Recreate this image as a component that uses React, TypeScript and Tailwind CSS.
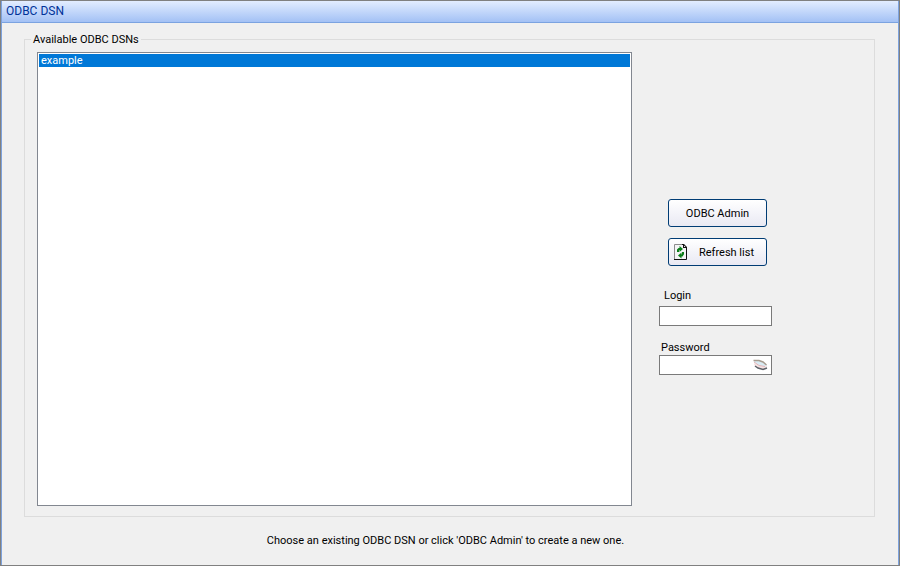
import { useState } from "react";

const DSN_LIST = ["example"];

const RefreshIcon = () => (
  <svg width="13" height="16" viewBox="0 0 13 16" aria-hidden="true">
    <path d="M0.5 0.5H9.500L12.500 3.500V15.500H0.5Z" fill="#f4f4f6" />
    <path d="M0.5 15.500V0.5H9" fill="none" stroke="#8c8c8c" />
    <path d="M8 0H10L13 3V5H12V4H9V1H8Z" fill="#111" />
    <path d="M10 1.500L11.500 3H10Z" fill="#fff" />
    <path d="M12.500 4V15.500H0" fill="none" stroke="#111" />
    <path d="M4 8V6L5 5H6" fill="none" stroke="#0b7d18" strokeWidth="2" />
    <path d="M5.500 2L9 5L5.500 8Z" fill="#0b7d18" />
    <path d="M9 8V10L8 11.500H7" fill="none" stroke="#0b7d18" strokeWidth="2" />
    <path d="M7.500 8.500L4 11.500L7.500 14.500Z" fill="#0b7d18" />
  </svg>
);

const EraserIcon = () => (
  <svg width="15" height="12" viewBox="0 0 15 12" aria-hidden="true">
    <path d="M1 4L7 7L12 7.500L14 6V8.500L11 10L6 9.500L1 6Z" fill="#f6e4e4" />
    <path d="M1 1.500L6 1L12 4L14 7L11 7.500L6 6.500L1 3Z" fill="#d9ecf4" />
    <path d="M0.500 1.500L6 1.500L10 3L13.500 6" fill="none" stroke="#a89c8f" strokeWidth="1.500" />
    <path d="M1 3L6 6.500L12 7.500" fill="none" stroke="#e3b4b8" />
    <path d="M2 7L5 9L10 10.500L14 9" fill="none" stroke="#5d6269" strokeWidth="1.500" />
  </svg>
);

const buttonClass =
  "relative flex h-7 w-[99px] items-center justify-center rounded-[3px] border border-[#003c74] bg-linear-to-b from-white to-[#e9e9f3] pt-0.5";

const inputClass =
  "block h-5 w-[113px] border border-[#7a7a7a] bg-white px-1 outline-none";

export default function App() {
  const [dsn, setDsn] = useState(DSN_LIST[0]);
  const [login, setLogin] = useState("");
  const [password, setPassword] = useState("");

  return (
    <div className="flex h-screen flex-col border border-[#808080] bg-[#f0f0f0] font-['Roboto',sans-serif] text-[11px] leading-4 text-black">
      <div className="flex flex-1 flex-col border-x border-[#7da2dd]">
        <header className="flex h-[22px] items-center border-b border-[#7ba3e0] bg-linear-to-b from-[#e3edff] to-[#a3c1f5] px-1 pb-0.5">
          <h1 className="text-xs text-[#003399]">ODBC DSN</h1>
        </header>

        <main className="grid flex-1 grid-rows-[1fr_auto] pt-[7px] pr-[23px] pl-[22px]">
          <fieldset className="grid grid-cols-[1fr_230px] border border-[#dcdcdc] px-3 pt-1 pb-[10px]">
            <legend className="-ml-1.5 px-0.5 pt-0.5">Available ODBC DSNs</legend>

            <select
              size={2}
              aria-label="Available ODBC DSNs"
              className="h-full min-w-0 appearance-none overflow-hidden border border-[#828790] bg-white p-px outline-none"
              value={dsn}
              onChange={(e) => setDsn(e.target.value)}
            >
              {DSN_LIST.map((name) => (
                <option
                  key={name}
                  value={name}
                  className="h-[13px] min-h-0 p-0 px-0.5 leading-[14px] checked:bg-[linear-gradient(#0078d7,#0078d7)] checked:[-webkit-text-fill-color:white]"
                >
                  {name}
                </option>
              ))}
            </select>

            <div className="flex flex-col justify-center pt-4 pl-[27px]">
              <div className="ml-[9px] flex flex-col gap-[11px]">
                <button type="button" className={buttonClass}>
                  ODBC Admin
                </button>
                <button type="button" className={`${buttonClass} pl-[18px]`}>
                  <span className="absolute top-[5px] left-[5px]">
                    <RefreshIcon />
                  </span>
                  Refresh list
                </button>
              </div>

              <label htmlFor="login" className="mt-[23px] mb-[3px] pl-[5px] leading-[14px]">
                Login
              </label>
              <input
                id="login"
                type="text"
                className={inputClass}
                value={login}
                onChange={(e) => setLogin(e.target.value)}
              />

              <label htmlFor="password" className="mt-[15px] pl-0.5 leading-[14px]">
                Password
              </label>
              <div className="relative w-[113px]">
                <input
                  id="password"
                  type="password"
                  className={inputClass}
                  value={password}
                  onChange={(e) => setPassword(e.target.value)}
                />
                <span className="absolute top-1 right-1">
                  <EraserIcon />
                </span>
              </div>
            </div>
          </fieldset>

          <p className="pt-4 pr-2 pb-4 text-center">
            Choose an existing ODBC DSN or click 'ODBC Admin' to create a new one.
          </p>
        </main>
      </div>
    </div>
  );
}
